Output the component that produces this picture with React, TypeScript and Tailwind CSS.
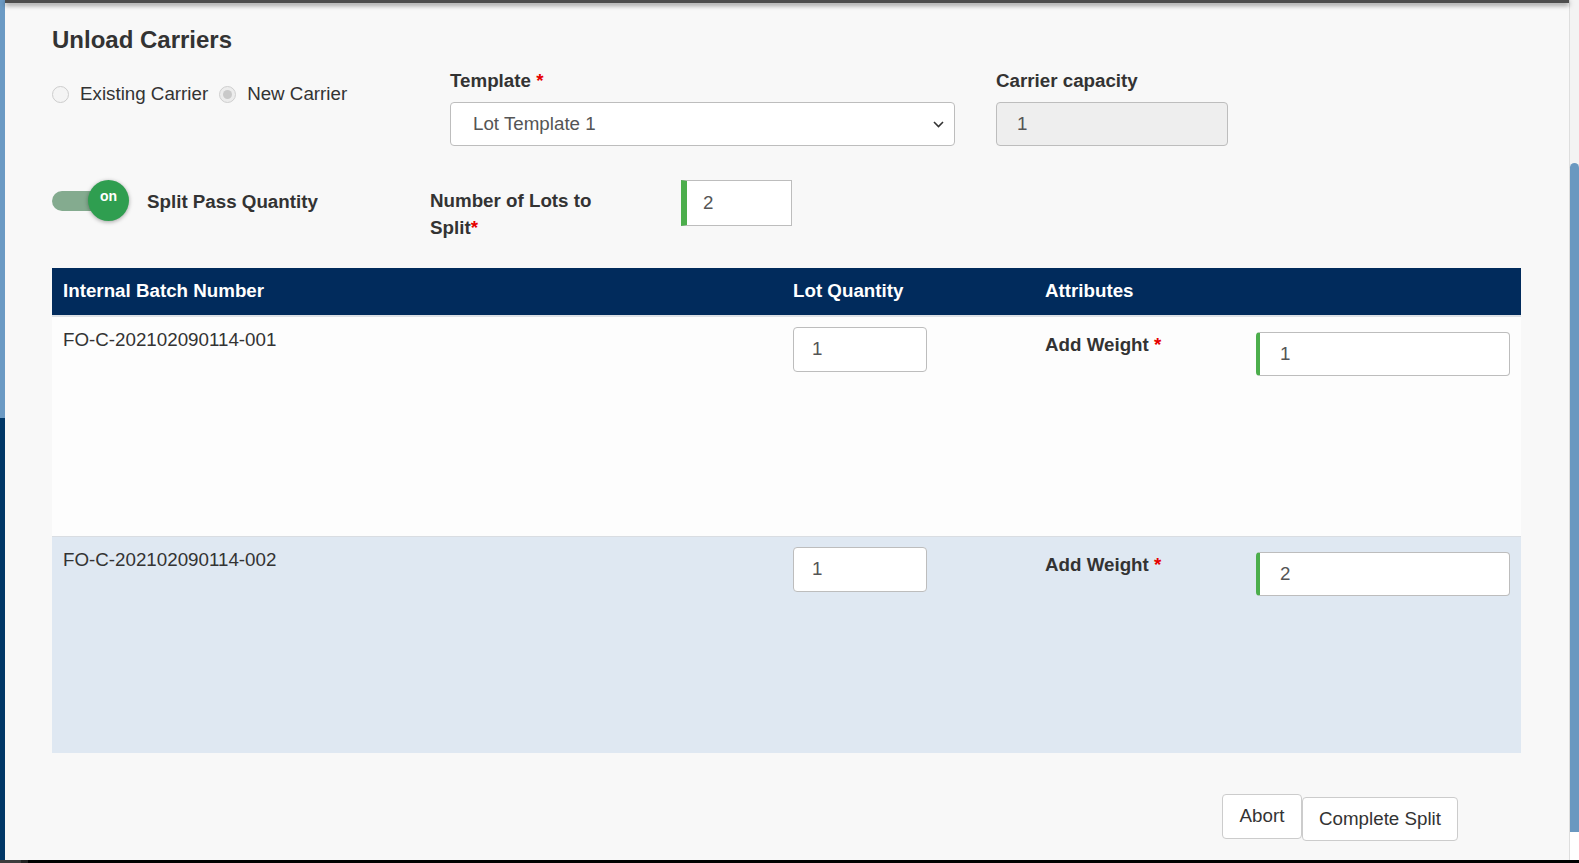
import React from "react";

const FONT = "font-['Liberation_Sans',Arial,sans-serif]";

function Radio({ checked, label }: { checked?: boolean; label: string }) {
  return (
    <label className="flex items-center gap-[11px]">
      <span
        className={`flex h-[17px] w-[17px] items-center justify-center rounded-full border ${
          checked ? "border-[#cfcfcf] bg-[#ececec]" : "border-[#cdcdcd] bg-[#f4f4f4]"
        }`}
      >
        {checked && <span className="h-[9px] w-[9px] rounded-full bg-[#c9c9c9]" />}
      </span>
      <span className="leading-[24px] text-[#333]">{label}</span>
    </label>
  );
}

function Toggle() {
  return (
    <div className="relative h-[41px] w-[77px] shrink-0">
      <span className="absolute left-0 top-[11px] h-[20px] w-[56px] rounded-full bg-[#84ab8f]" />
      <span className="absolute right-0 top-0 flex h-[41px] w-[41px] justify-center rounded-full bg-[#2f9e50] pt-[8px] text-[14px] font-bold leading-[16px] text-white shadow-[0_1px_4px_rgba(0,0,0,0.35)]">
        on
      </span>
    </div>
  );
}

function Req() {
  return <span className="text-[#e60000]">*</span>;
}

type Lot = { id: string; qty: string; weight: string; alt?: boolean };

const LOTS: Lot[] = [
  { id: "FO-C-202102090114-001", qty: "1", weight: "1" },
  { id: "FO-C-202102090114-002", qty: "1", weight: "2", alt: true },
];

function LotRow({ lot }: { lot: Lot }) {
  return (
    <div
      className={`grid grid-cols-[730px_252px_1fr] pt-[10px] ${
        lot.alt ? "h-[217px] border-t border-[#d9dde2] bg-[#dfe8f2]" : "h-[219px] bg-[#fdfdfd]"
      }`}
    >
      <div className="mt-[1px] px-[11px] leading-[24px] text-[#333]">{lot.id}</div>
      <div className="px-[11px]">
        <div className="flex h-[45px] w-[134px] items-center rounded-[4px] border border-[#bdbdbd] bg-white pl-[18px] text-[#555]">
          {lot.qty}
        </div>
      </div>
      <div className="flex items-start px-[11px]">
        <div className="mt-[6px] w-[211px] font-bold leading-[24px] text-[#333]">
          Add Weight <Req />
        </div>
        <div className="mt-[5px] flex h-[44px] flex-1 items-center rounded-[4px] border border-l-4 border-[#bdbdbd] border-l-[#4cae4c] bg-white pl-[20px] text-[#555]">
          {lot.weight}
        </div>
      </div>
    </div>
  );
}

export default function App() {
  return (
    <div className={`flex h-[863px] w-[1579px] flex-col overflow-hidden bg-black text-[18.75px] ${FONT}`}>
      <div className="flex h-[860px]">
        {/* page behind the modal */}
        <div className="flex w-[5px] shrink-0 flex-col">
          <div className="h-[418px] bg-[#6b9ac4]" />
          <div className="flex-1 bg-[#003767]" />
        </div>

        {/* modal body */}
        <div className="relative min-w-0 flex-1 bg-[#f8f8f8] pl-[47px]">
          <div className="absolute inset-x-0 top-0 h-[3px] bg-[#4d4d4d] shadow-[0_2px_5px_rgba(0,0,0,0.55)]" />

          <h2 className="pt-[26px] text-[24px] font-bold leading-[28px] text-[#333]">Unload Carriers</h2>

          {/* carrier / template / capacity */}
          <div className="mt-[15px] flex items-start">
            <div className="flex w-[398px] items-start gap-[11px] pt-[13px]">
              <Radio label="Existing Carrier" />
              <Radio checked label="New Carrier" />
            </div>
            <div className="w-[505px]">
              <div className="font-bold leading-[24px] text-[#333]">
                Template <Req />
              </div>
              <div className="mt-[9px] flex h-[44px] items-center justify-between rounded-[4px] border border-[#bdbdbd] bg-white pl-[22px] pr-[10px] text-[#555]">
                <span>Lot Template 1</span>
                <svg width="11" height="7" viewBox="0 0 11 7" fill="none">
                  <polyline points="1,1 5.5,5.5 10,1" stroke="#333" strokeWidth="1.6" />
                </svg>
              </div>
            </div>
            <div className="ml-[41px] w-[232px]">
              <div className="font-bold leading-[24px] text-[#333]">Carrier capacity</div>
              <div className="mt-[9px] flex h-[44px] items-center rounded-[4px] border border-[#bdbdbd] bg-[#eeeeee] pl-[20px] text-[#555]">
                1
              </div>
            </div>
          </div>

          {/* split options */}
          <div className="mt-[34px] flex items-start">
            <div className="flex w-[378px] items-start">
              <Toggle />
              <div className="ml-[18px] mt-[10px] font-bold leading-[24px] text-[#333]">Split Pass Quantity</div>
            </div>
            <div className="mt-[7px] w-[190px] font-bold leading-[27px] text-[#333]">
              Number of Lots to Split<Req />
            </div>
            <div className="ml-[61px] flex h-[46px] w-[111px] items-center border border-l-[6px] border-[#bdbdbd] border-l-[#4cae4c] bg-white pl-[16px] text-[#555]">
              2
            </div>
          </div>

          {/* lots table */}
          <div className="mt-[27px] w-[1469px]">
            <div className="grid h-[49px] grid-cols-[730px_252px_1fr] items-center border-b-2 border-[#dde1e6] bg-[#012b5c] font-bold text-white">
              <div className="px-[11px]">Internal Batch Number</div>
              <div className="px-[11px]">Lot Quantity</div>
              <div className="px-[11px]">Attributes</div>
            </div>
            {LOTS.map((lot) => (
              <LotRow key={lot.id} lot={lot} />
            ))}
          </div>

          <div className="mt-[41px] flex w-[1469px] items-start justify-end pr-[63px]">
            <button className="h-[45px] w-[80px] rounded-[4px] border border-[#cccccc] bg-white text-[#333]">Abort</button>
            <button className="mt-[3px] h-[44px] w-[156px] rounded-[4px] border border-[#cccccc] bg-white text-[#333]">
              Complete Split
            </button>
          </div>
        </div>

        {/* scrollbar */}
        <div className="flex w-[10px] shrink-0 flex-col border-l border-[#dedede] bg-[#f3f3f3]">
          <div className="h-[163px]" />
          <div className="h-[669px] rounded-t-full rounded-b-[5px] bg-[#6a98c0]" />
          <div className="flex-1 bg-white" />
        </div>
      </div>
      <div className="flex h-[3px] shrink-0">
        <span className="w-[21px] bg-[#3c3c3c]" />
        <span className="w-[7px] bg-[#222]" />
      </div>
    </div>
  );
}
